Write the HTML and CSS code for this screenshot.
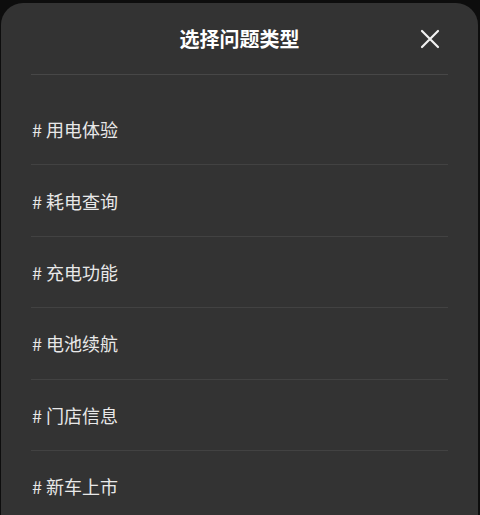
FILE: index.html
```html
<!DOCTYPE html>
<html lang="zh-CN">
<head>
  <meta charset="UTF-8">
  <title>选择问题类型</title>
  <link rel="stylesheet" href="styles.css">
</head>
<body>
  <div class="sheet">
    <div class="sheet-header">
      <h2>选择问题类型</h2>
      <button class="close-btn" aria-label="关闭">
        <svg width="20" height="20" viewBox="0 0 20 20">
          <path d="M2 2 L18 18 M18 2 L2 18" stroke="#f2f2f2" stroke-width="2.2" stroke-linecap="round" fill="none"/>
        </svg>
      </button>
    </div>

    <ul class="topic-list">
      <li class="topic-item"># 用电体验</li>
      <li class="topic-item"># 耗电查询</li>
      <li class="topic-item"># 充电功能</li>
      <li class="topic-item"># 电池续航</li>
      <li class="topic-item"># 门店信息</li>
      <li class="topic-item"># 新车上市</li>
    </ul>
  </div>
</body>
</html>
```

FILE: styles.css
```css
* {
  margin: 0;
  padding: 0;
  box-sizing: border-box;
}

html, body {
  width: 480px;
  height: 515px;
  overflow: hidden;
}

body {
  background: #0d0d0d;
  font-family: "Noto Sans CJK SC", "Noto Sans", sans-serif;
  padding: 3px 2px 0 1px;
}

.sheet {
  background: #333333;
  border-radius: 22px 22px 0 0;
  height: 100%;
  padding: 0 30px;
}

.sheet-header {
  position: relative;
  height: 72px;
  border-bottom: 1px solid #474747;
  display: flex;
  align-items: center;
  justify-content: center;
}

h2 {
  color: #ffffff;
  font-size: 20px;
  font-weight: 700;
  margin-top: -1px;
}

.close-btn {
  position: absolute;
  right: 8px;
  top: 26px;
  width: 20px;
  height: 20px;
  background: none;
  border: none;
  display: flex;
}

.topic-list {
  list-style: none;
  padding-top: 19px;
}

.topic-item {
  height: 71.4px;
  display: flex;
  align-items: center;
  color: #e8e8e8;
  font-size: 18px;
  border-bottom: 1px solid #424242;
  padding-left: 1px;
}
```
